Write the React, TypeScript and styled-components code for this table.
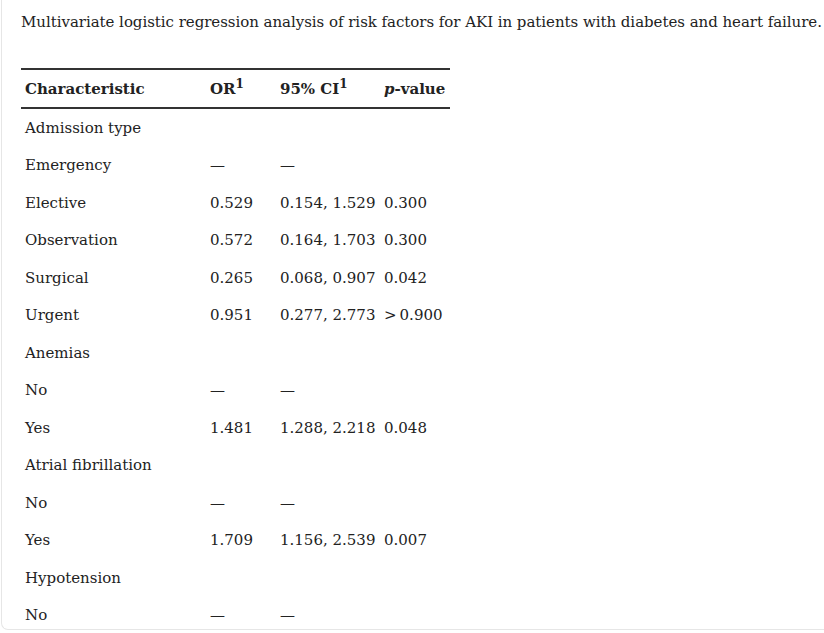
import React from 'react';
import styled, { createGlobalStyle } from 'styled-components';

const GlobalStyle = createGlobalStyle`
  html, body {
    margin: 0;
    padding: 0;
    background: #ffffff;
    overflow: hidden;
  }
  body {
    font-family: 'DejaVu Serif', 'Liberation Serif', serif;
    color: #222222;
  }
`;

type Row = {
  label: string;
  or?: string;
  ci?: string;
  p?: string;
};

const rows: Row[] = [
  { label: 'Admission type' },
  { label: 'Emergency', or: '—', ci: '—' },
  { label: 'Elective', or: '0.529', ci: '0.154, 1.529', p: '0.300' },
  { label: 'Observation', or: '0.572', ci: '0.164, 1.703', p: '0.300' },
  { label: 'Surgical', or: '0.265', ci: '0.068, 0.907', p: '0.042' },
  { label: 'Urgent', or: '0.951', ci: '0.277, 2.773', p: '>\u20090.900' },
  { label: 'Anemias' },
  { label: 'No', or: '—', ci: '—' },
  { label: 'Yes', or: '1.481', ci: '1.288, 2.218', p: '0.048' },
  { label: 'Atrial fibrillation' },
  { label: 'No', or: '—', ci: '—' },
  { label: 'Yes', or: '1.709', ci: '1.156, 2.539', p: '0.007' },
  { label: 'Hypotension' },
  { label: 'No', or: '—', ci: '—' },
];

export default function App() {
  return (
    <>
      <GlobalStyle />
      <Card>
        <Caption>
          Multivariate logistic regression analysis of risk factors for AKI in patients with diabetes and heart failure.
        </Caption>
        <Table>
          <colgroup>
            <col style={{ width: 185 }} />
            <col style={{ width: 70 }} />
            <col style={{ width: 104 }} />
            <col style={{ width: 70 }} />
          </colgroup>
          <thead>
            <tr>
              <HeadCell>Characteristic</HeadCell>
              <HeadCell>
                OR<Sup>1</Sup>
              </HeadCell>
              <HeadCell>
                95% CI<Sup>1</Sup>
              </HeadCell>
              <HeadCell>
                <em>p</em>-value
              </HeadCell>
            </tr>
          </thead>
          <tbody>
            {rows.map((row, index) => (
              <tr key={index}>
                <Cell>{row.label}</Cell>
                <Cell>{row.or}</Cell>
                <Cell>{row.ci}</Cell>
                <Cell>{row.p}</Cell>
              </tr>
            ))}
          </tbody>
        </Table>
      </Card>
    </>
  );
}

const Card = styled.div`
  height: 630px;
  box-sizing: border-box;
  margin-left: 1px;
  padding: 12px 0 0 19px;
  border-left: 1px solid #e6e6e6;
  border-bottom: 1px solid #e6e6e6;
  border-bottom-left-radius: 7px;
  overflow: hidden;
`;

const Caption = styled.div`
  font-size: 15px;
  line-height: 21px;
  letter-spacing: -0.04px;
  white-space: nowrap;
  color: #222222;
`;

const Table = styled.table`
  margin-top: 35px;
  border-collapse: collapse;
  table-layout: fixed;
  width: 429px;
  font-size: 15px;

  thead tr {
    border-top: 2px solid #333333;
    border-bottom: 2px solid #333333;
  }
`;

const HeadCell = styled.th`
  height: 37px;
  padding: 0 4px;
  text-align: left;
  font-weight: bold;
  white-space: nowrap;
`;

const Cell = styled.td`
  height: 37.5px;
  padding: 0 4px;
  text-align: left;
  white-space: nowrap;
  vertical-align: middle;
`;

const Sup = styled.sup`
  font-size: 0.8em;
  line-height: 0;
  vertical-align: 0.5em;
`;
